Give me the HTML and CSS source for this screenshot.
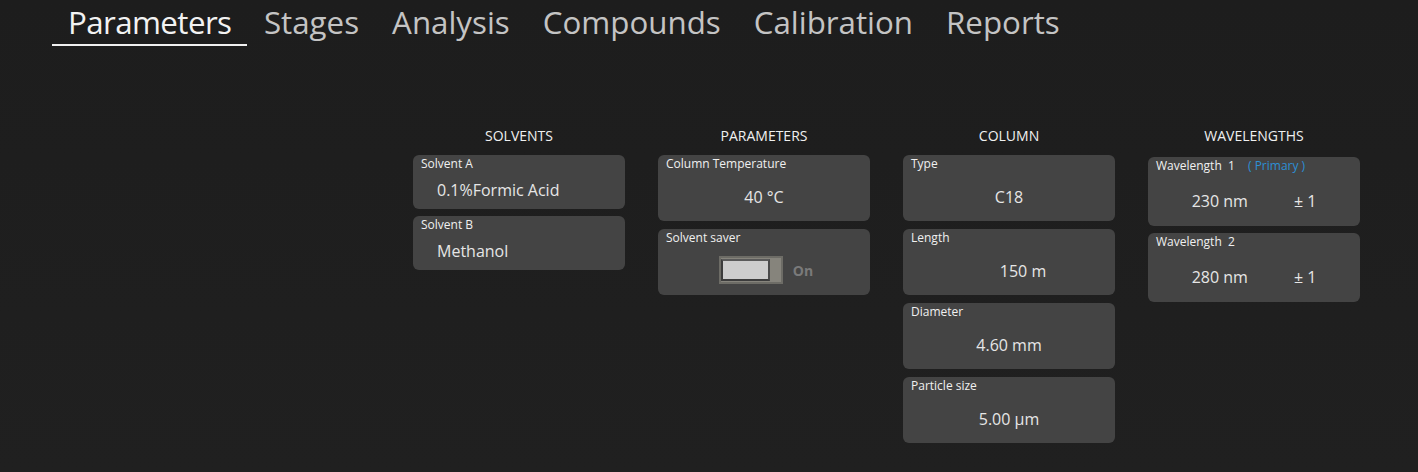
FILE: index.html
```html
<!DOCTYPE html>
<html>
<head>
<meta charset="utf-8">
<link rel="stylesheet" href="styles.css">
</head>
<body>
<nav class="tabs">
  <div class="tab active">Parameters</div>
  <div class="tab">Stages</div>
  <div class="tab">Analysis</div>
  <div class="tab">Compounds</div>
  <div class="tab">Calibration</div>
  <div class="tab">Reports</div>
</nav>
<main class="content">
  <section class="col">
    <h2 class="col-title">SOLVENTS</h2>
    <div class="stack stack-sm">
      <div class="card card-sm">
        <div class="label">Solvent A</div>
        <div class="value value-left">0.1%Formic Acid</div>
      </div>
      <div class="card card-sm">
        <div class="label">Solvent B</div>
        <div class="value value-left">Methanol</div>
      </div>
    </div>
  </section>
  <section class="col">
    <h2 class="col-title">PARAMETERS</h2>
    <div class="stack">
      <div class="card">
        <div class="label">Column Temperature</div>
        <div class="value">40 °C</div>
      </div>
      <div class="card">
        <div class="label">Solvent saver</div>
        <div class="toggle-row">
          <div class="toggle"><div class="thumb"></div></div>
          <span class="toggle-text">On</span>
        </div>
      </div>
    </div>
  </section>
  <section class="col">
    <h2 class="col-title">COLUMN</h2>
    <div class="stack">
      <div class="card">
        <div class="label">Type</div>
        <div class="value">C18</div>
      </div>
      <div class="card">
        <div class="label">Length</div>
        <div class="value value-len">150 m</div>
      </div>
      <div class="card">
        <div class="label">Diameter</div>
        <div class="value">4.60 mm</div>
      </div>
      <div class="card">
        <div class="label">Particle size</div>
        <div class="value">5.00 µm</div>
      </div>
    </div>
  </section>
  <section class="col">
    <h2 class="col-title">WAVELENGTHS</h2>
    <div class="stack stack-wl">
      <div class="card card-wl">
        <div class="label">Wavelength&nbsp;&nbsp;1 <span class="primary">( Primary )</span></div>
        <div class="value wl-row"><span>230 nm</span><span>± 1</span></div>
      </div>
      <div class="card card-wl">
        <div class="label">Wavelength&nbsp;&nbsp;2</div>
        <div class="value wl-row"><span>280 nm</span><span>± 1</span></div>
      </div>
    </div>
  </section>
</main>
</body>
</html>
```

FILE: styles.css
```css
html, body {
  margin: 0;
  padding: 0;
}
body {
  background: linear-gradient(#1d1d1d, #202020);
  height: 472px;
  overflow: hidden;
  font-family: "Open Sans", "Noto Sans", sans-serif;
  color: #e8e8e8;
}
.tabs {
  display: flex;
  padding-left: 52px;
}
.tab {
  padding: 0 16.5px;
  font-size: 31.3px;
  line-height: 44px;
  color: #c4c4c4;
  border-bottom: 2px solid transparent;
}
.tab.active {
  padding: 0 16px;
  color: #f2f2f2;
  border-bottom-color: #f0f0f0;
  letter-spacing: -0.6px;
}
.content {
  display: flex;
  gap: 33px;
  margin-top: 81px;
  padding-left: 413px;
}
.col {
  width: 212px;
  display: flex;
  flex-direction: column;
}
.col-title {
  margin: 0 0 10px;
  font-size: 14px;
  font-weight: 400;
  line-height: 18px;
  text-align: center;
  color: #f0f0f0;
}
.stack {
  display: flex;
  flex-direction: column;
  gap: 8px;
}
.stack-sm {
  gap: 7px;
}
.stack-wl {
  gap: 7px;
  margin-top: 2px;
}
.card {
  background: #444444;
  border-radius: 6px;
  height: 66px;
  box-sizing: border-box;
  padding: 1px 8px 0;
  display: flex;
  flex-direction: column;
}
.card-sm {
  height: 54px;
}
.card-wl {
  height: 69px;
}
.label {
  font-size: 12px;
  line-height: 16px;
  color: #f0f0f0;
}
.primary {
  color: #2d8fd5;
  margin-left: 10px;
}
.value {
  font-size: 16px;
  line-height: 22px;
  margin-top: 14px;
  text-align: center;
  color: #e6e6e6;
}
.value-len {
  padding-left: 28px;
}
.value-left {
  text-align: left;
  padding-left: 16px;
  margin-top: 7px;
}
.card-wl .value {
  margin-top: 16px;
}
.wl-row {
  display: flex;
  justify-content: center;
  gap: 46px;
}
.toggle-row {
  display: flex;
  align-items: center;
  justify-content: center;
  gap: 10px;
  margin-top: 10px;
  padding-left: 4px;
}
.toggle {
  width: 64px;
  height: 28px;
  box-sizing: border-box;
  background: #86847c;
  border: 2px solid #6d6c66;
  padding: 1px 11px 1px 0;
  display: flex;
}
.thumb {
  flex: 1;
  background: #cdcdcd;
  border: 2px solid #3c3c3c;
  border-top-color: #5a5a5a;
  border-right-color: #4a4a4a;
}
.toggle-text {
  font-size: 14px;
  font-weight: 700;
  color: #7a7a7a;
}
```
